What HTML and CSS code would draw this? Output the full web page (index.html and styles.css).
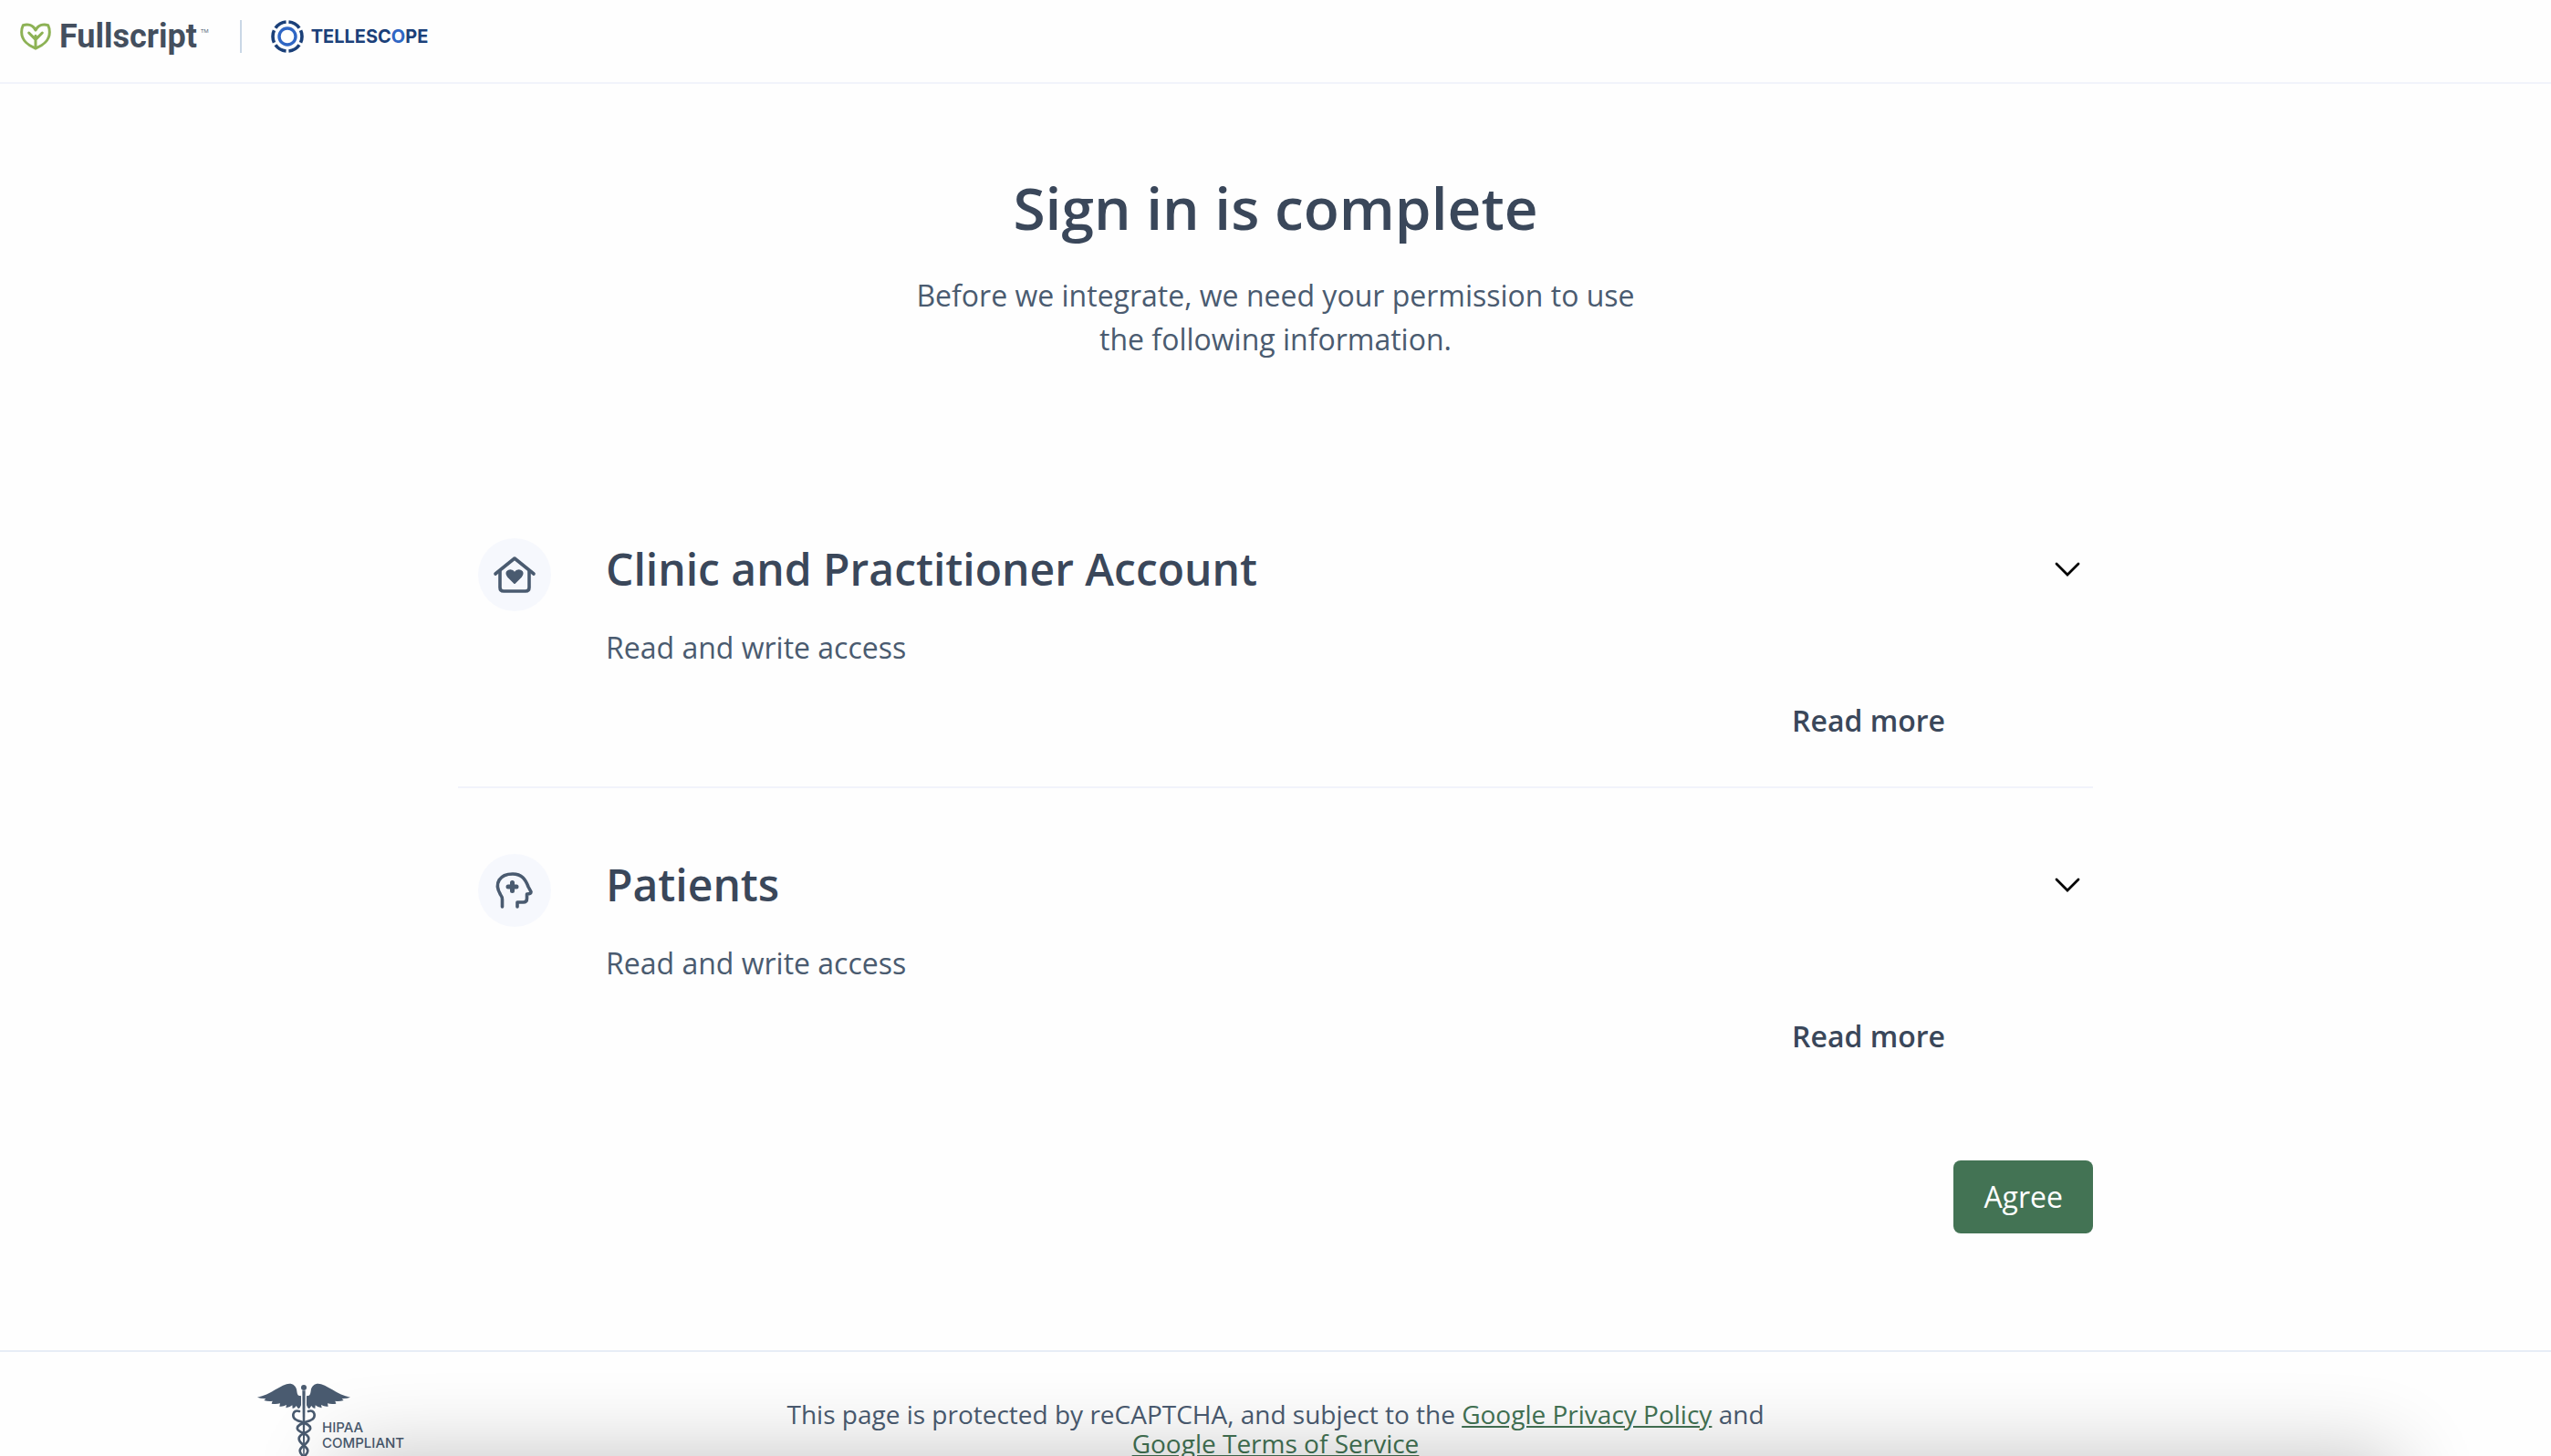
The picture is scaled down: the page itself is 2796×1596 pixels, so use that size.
FILE: index.html
```
<!DOCTYPE html>
<html lang="en">
<head>
    <meta charset="utf-8">
    <title>Fullscript - Tellescope</title>
    <link rel="stylesheet" href="styles.css">
</head>
<body>
    <div class="page">
        <header class="header">
            <div class="fullscript">
                <svg class="leaf" viewBox="0 0 102 88" fill="none" stroke="#8db255" stroke-width="9" stroke-linecap="round" stroke-linejoin="round">
                    <path d="M51 83C27 74 5 56 5 30C5 22 7 13 10 7C27 2 43 7 51 23C59 7 75 2 92 7C95 13 97 22 97 30C97 56 75 74 51 83Z"/>
                    <path d="M51 82V42M51 54L29 32M51 54L73 32"/>
                </svg>
                <span class="fullscript-name">Fullscript</span>
                <span class="tm">TM</span>
            </div>
            <div class="tellescope">
                <svg class="ring" viewBox="0 0 36 36" fill="none">
                    <circle cx="18" cy="18" r="16" stroke="#1b4079" stroke-width="3.6" pathLength="60" stroke-dasharray="8.2 1.8" stroke-dashoffset="-0.9" transform="rotate(-90 18 18)"/>
                    <circle cx="18" cy="18" r="9" stroke="#2f66c4" stroke-width="3.4"/>
                </svg>
                <span class="tellescope-name">TELLESC<span class="blue">O</span>PE</span>
            </div>
        </header>

        <main class="main">
            <h1>Sign in is complete</h1>
            <p class="intro">Before we integrate, we need your permission to use the following information.</p>

            <section class="scope">
                <div class="scope-icon">
                    <svg viewBox="0 0 48 48" fill="none" stroke="#4a5b70" stroke-width="3.6" stroke-linecap="round" stroke-linejoin="round">
                        <path d="M3 23L24 6L45 23"/>
                        <path d="M8 20V38Q8 42 12 42H36Q40 42 40 38V20"/>
                        <path d="M24 33L17 26C12 20 20 17 24 22C28 17 36 20 31 26Z" fill="#4a5b70" stroke-width="2"/>
                    </svg>
                </div>
                <div class="scope-body">
                    <h2>Clinic and Practitioner Account</h2>
                    <p>Read and write access</p>
                    <button class="read-more">Read more</button>
                </div>
                <button class="toggle" aria-label="Expand Clinic and Practitioner Account">
                    <svg viewBox="0 0 28 18" fill="none" stroke="#000" stroke-width="2.8" stroke-linecap="round"><path d="M2 3L14 15L26 3"/></svg>
                </button>
            </section>

            <section class="scope">
                <div class="scope-icon">
                    <svg viewBox="0 0 48 48" fill="none" stroke="#4a5b70" stroke-width="3.6" stroke-linecap="round" stroke-linejoin="round">
                        <path d="M10.500 42V34Q10.500 31 8.500 28.500C1 16 8 6 22 6C32 6 36 12 39 20L42 25.500Q42 28 37.500 28V33Q37.500 37 33.500 37H27V42"/>
                        <path d="M21.500 15.500V24.500M17 20H26" stroke-width="5"/>
                    </svg>
                </div>
                <div class="scope-body">
                    <h2>Patients</h2>
                    <p>Read and write access</p>
                    <button class="read-more">Read more</button>
                </div>
                <button class="toggle" aria-label="Expand Patients">
                    <svg viewBox="0 0 28 18" fill="none" stroke="#000" stroke-width="2.8" stroke-linecap="round"><path d="M2 3L14 15L26 3"/></svg>
                </button>
            </section>

            <div class="actions">
                <button class="agree">Agree</button>
            </div>
        </main>

        <footer class="footer">
            <div class="hipaa">
                <svg class="caduceus" viewBox="0 0 306 250">
                    <g fill="#4a5b70">
                        <path id="wing" d="M144 40C132 44 131 34 130 24C127 5 112 -2 96 3C69 11 42 38 0 46Q14 51 28 50L22 56Q36 60 50 58L47 67Q62 70 75 66L73 76Q84 78 96 71L94 81Q106 80 115 72L116 83Q124 82 128 74L135 84Q142 80 144 72Z"/>
                        <use href="#wing" transform="translate(306 0) scale(-1 1)"/>
                        <circle cx="153" cy="14" r="9"/>
                        <path d="M148 24H158L155 250H151Z"/>
                    </g>
                    <g fill="none" stroke="#4a5b70" stroke-width="8" stroke-linecap="round">
                        <path d="M138 92C116 84 111 112 130 121C152 130 178 136 174 150C170 164 137 162 137 182C137 200 166 206 166 222C166 236 150 238 150 250"/>
                        <path d="M168 92C190 84 195 112 176 121C154 130 128 136 132 150C136 164 169 162 169 182C169 200 140 206 140 222C140 236 156 238 156 250"/>
                    </g>
                    <path d="M132 22C134 34 136 40 146 41M174 22C172 34 170 40 160 41" fill="none" stroke="#fefefe" stroke-width="2"/>
                </svg>
                <span class="hipaa-text">HIPAA<br>COMPLIANT</span>
            </div>
            <p class="legal">This page is protected by reCAPTCHA, and subject to the <a href="#">Google Privacy Policy</a> and <a href="#">Google Terms of Service</a></p>
        </footer>
    </div>
    <div class="bottom-shadow"></div>
</body>
</html>
```
FILE: styles.css
```
* {
    box-sizing: border-box;
}
body {
    margin: 0;
    background-color: #fefefe;
    color: #4a5b70;
    font-family: "Open Sans", "Noto Sans", sans-serif;
    font-size: 32px;
    line-height: 48px;
}
h1, h2, p {
    margin: 0;
}
h1, h2 {
    font-weight: 600;
    color: #3a475a;
}
button {
    border: none;
    background: none;
    padding: 0;
    font-family: inherit;
    font-size: 32px;
    line-height: 48px;
    color: inherit;
    cursor: pointer;
}
svg {
    display: block;
}
.page {
    height: 100vh;
    overflow-y: auto;
    scrollbar-width: none;
}

/* header */
.header {
    display: flex;
    align-items: center;
    height: 92px;
    padding: 0 22px 10px;
    border-bottom: 2px solid #f1f3fb;
}
.fullscript {
    display: flex;
    align-items: center;
    padding-right: 34px;
    height: 36px;
    border-right: 2px solid #c9d7e6;
}
.leaf {
    width: 34px;
    height: 30px;
    margin-right: 9px;
}
.fullscript-name {
    font-family: Roboto, sans-serif;
    font-size: 36px;
    line-height: 36px;
    font-weight: 700;
    color: #444f5e;
}
.tm {
    align-self: flex-start;
    margin: 8px 0 0 4px;
    font-size: 6px;
    line-height: 8px;
}
.tellescope {
    display: flex;
    align-items: center;
    gap: 8px;
    padding-left: 32px;
}
.ring {
    width: 36px;
    height: 36px;
}
.tellescope-name {
    font-family: Inter, sans-serif;
    font-size: 20px;
    line-height: 36px;
    font-weight: 700;
    color: #1b4079;
}
.blue {
    color: #2f66c4;
}

/* content */
.main {
    max-width: 1792px;
    margin: 0 auto;
    padding: 96px 0 128px;
}
h1 {
    font-size: 64px;
    line-height: 80px;
    text-align: center;
}
.intro {
    max-width: 800px;
    margin: 32px auto 128px;
    text-align: center;
}
.scope {
    display: flex;
    padding: 66px 14px 48px 22px;
    border-bottom: 2px solid #f1f3fb;
}
.scope:nth-of-type(2) {
    padding-top: 72px;
    border-bottom: none;
}
.scope-icon {
    display: flex;
    align-items: center;
    justify-content: center;
    width: 80px;
    height: 80px;
    border-radius: 50%;
    background-color: #f6f8fd;
}
.scope-icon svg {
    width: 48px;
    height: 48px;
}
.scope-body {
    flex: 1;
    display: flex;
    flex-direction: column;
    padding: 0 120px 0 60px;
}
h2 {
    font-size: 48px;
    line-height: 68px;
}
.scope-body p {
    margin: 28px 0 32px;
}
.read-more {
    align-self: flex-end;
    font-weight: 600;
    color: #3a475a;
}
.toggle {
    align-self: flex-start;
    width: 28px;
    height: 68px;
    line-height: 0;
}
.actions {
    display: flex;
    justify-content: flex-end;
    padding-top: 64px;
}
.agree {
    height: 80px;
    padding: 0 33px;
    border-radius: 8px;
    background-color: #437354;
    color: #fff;
}

/* footer */
.footer {
    display: grid;
    grid-template-columns: 1fr 1120px 1fr;
    border-top: 2px solid #e7edf6;
    padding-top: 34px;
}
.hipaa {
    display: flex;
    padding-left: 282px;
}
.caduceus {
    width: 102px;
    height: 84px;
}
.hipaa-text {
    margin: 40px 0 0 -31px;
    font-family: Inter, sans-serif;
    font-size: 15px;
    line-height: 17px;
    font-weight: 500;
}
.legal {
    padding-top: 18px;
    font-size: 28px;
    line-height: 32px;
    text-align: center;
}
.legal a {
    color: #437354;
}

/* shade along the bottom edge of the window */
.bottom-shadow {
    position: fixed;
    top: 100%;
    left: 370px;
    right: 170px;
    height: 200px;
    box-shadow: 0 0 90px rgba(0, 0, 0, 0.24);
    pointer-events: none;
}
```
